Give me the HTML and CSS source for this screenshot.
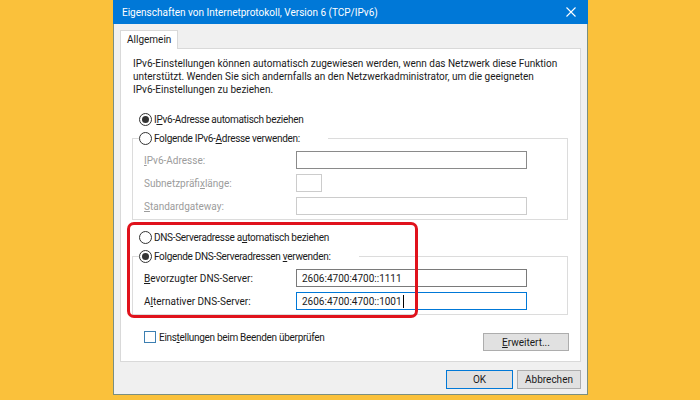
FILE: index.html
```html
<!DOCTYPE html>
<html>
<head>
  <meta charset="UTF-8">
  <title>Eigenschaften von Internetprotokoll, Version 6 (TCP/IPv6)</title>
  <link rel="stylesheet" href="styles.css">
</head>
<body>
  <div class="window">
    <div class="titlebar">
      <span class="title">Eigenschaften von Internetprotokoll, Version 6 (TCP/IPv6)</span>
      <span class="close">
        <svg width="10" height="10" viewBox="0 0 10 10"><path d="M0.5 0.5 L9.5 9.5 M9.5 0.5 L0.5 9.5" stroke="#fff" stroke-width="1.1" fill="none"/></svg>
      </span>
    </div>
    <div class="dialog">
      <div class="tabs"><div class="tab">Allgemein</div></div>
      <div class="panel">
        <p class="intro">IPv6-Einstellungen können automatisch zugewiesen werden, wenn das Netzwerk diese Funktion<br>
          unterstützt. Wenden Sie sich andernfalls an den Netzwerkadministrator, um die geeigneten<br>
          IPv6-Einstellungen zu beziehen.</p>

        <label class="radio first checked"><span class="circle"></span><span>I<u>P</u>v6-Adresse automatisch beziehen</span></label>
        <fieldset class="group">
          <legend><label class="radio"><span class="circle"></span><span>Folgende IPv6-<u>A</u>dresse verwenden:</span></label></legend>
          <div class="field disabled first-field"><span class="name"><u>I</u>Pv6-Adresse:</span><span class="edit wide strong"></span></div>
          <div class="field disabled"><span class="name">Subnetzpräfi<u>x</u>länge:</span><span class="edit small"></span></div>
          <div class="field disabled"><span class="name"><u>S</u>tandardgateway:</span><span class="edit wide"></span></div>
        </fieldset>

        <div class="dns">
          <label class="radio"><span class="circle"></span><span>DNS-Serveradresse a<u>u</u>tomatisch beziehen</span></label>
          <fieldset class="group">
            <legend><label class="radio checked"><span class="circle"></span><span>Folgende DNS-Serveradressen <u>v</u>erwenden:</span></label></legend>
            <div class="field first-field"><span class="name"><u>B</u>evorzugter DNS-Server:</span><span class="edit wide strong">2606:4700:4700::1111</span></div>
            <div class="field"><span class="name">A<u>l</u>ternativer DNS-Server:</span><span class="edit wide focus">2606:4700:4700::1001<i class="caret"></i></span></div>
          </fieldset>
          <div class="highlight"></div>
        </div>

        <div class="options">
          <label class="check"><span class="box"></span><span>Eins<u>t</u>ellungen beim Beenden überprüfen</span></label>
          <button class="btn advanced"><u>E</u>rweitert...</button>
        </div>
      </div>
      <div class="actions">
        <button class="btn ok">OK</button>
        <button class="btn cancel">Abbrechen</button>
      </div>
    </div>
  </div>
</body>
</html>
```

FILE: styles.css
```css
* {
  box-sizing: border-box;
}
body {
  margin: 0;
  height: 400px;
  overflow: hidden;
  background-color: #FAC13B;
  font-family: Roboto, "Noto Sans", sans-serif;
  font-size: 10px;
  color: #1a1a1a;
}
u {
  text-decoration-thickness: 1px;
  text-underline-offset: 1px;
}
.window {
  width: 475px;
  height: 395px;
  margin-left: 113px;
  background-color: #F0F0F0;
  border: 1px solid #7B8F80;
  border-top: none;
}
.titlebar {
  height: 24px;
  margin: 0 -1px;
  padding-left: 9px;
  background-color: #0078D7;
  display: flex;
  align-items: center;
  justify-content: space-between;
  color: #fff;
  font-size: 10px;
}
.close {
  width: 34px;
  height: 24px;
  display: flex;
  align-items: center;
  justify-content: center;
}
.close svg {
  display: block;
}
.dialog {
  padding: 6px 6px 0 6px;
}
.tabs {
  display: flex;
}
.tab {
  height: 19px;
  padding: 3px 6px 0 6px;
  margin-bottom: -1px;
  background-color: #fff;
  border: 1px solid #D9D9D9;
  border-bottom: none;
  position: relative;
  z-index: 1;
}
.panel {
  height: 314px;
  padding: 8px 12px 0 12px;
  background-color: #fff;
  border: 1px solid #D9D9D9;
}
p.intro {
  margin: 0;
  line-height: 13px;
  white-space: nowrap;
}

/* radio buttons */
.radio {
  height: 13px;
  display: flex;
  align-items: center;
  gap: 2px;
  line-height: 13px;
  letter-spacing: -0.3px;
  white-space: nowrap;
}
.radio.first {
  margin: 17px 0 0 6px;
}
.circle {
  width: 13px;
  height: 13px;
  border: 1px solid #333;
  border-radius: 50%;
  background-color: #fff;
  display: flex;
  align-items: center;
  justify-content: center;
}
.checked .circle::after {
  content: "";
  width: 7px;
  height: 7px;
  border-radius: 50%;
  background-color: #333;
}

/* group boxes */
fieldset.group {
  margin: 6px 0 0 -1px;
  padding: 0 0 4px 0;
  border: 1px solid #DCDCDC;
  min-width: 0;
}
fieldset.group legend {
  margin-left: 6px;
  padding: 0 28px 0 0;
  background-color: #fff;
}
.field {
  height: 18px;
  margin-top: 5px;
  padding-left: 11px;
  display: flex;
  align-items: center;
}
.field.first-field {
  margin-top: 6px;
}
.field .name {
  width: 152px;
  flex: none;
}
.field.disabled .name {
  color: #9C9C9C;
}
.edit {
  height: 18px;
  padding-left: 5px;
  border: 1px solid #7A7A7A;
  background-color: #fff;
  display: flex;
  align-items: center;
}
.edit.wide {
  width: 231px;
}
.edit.small {
  width: 26px;
}
.disabled .edit {
  border-color: #CCCCCC;
}
.disabled .edit.strong {
  border-color: #8A8A8A;
}
.edit.focus {
  border-color: #0078D7;
}
.caret {
  width: 1px;
  height: 13px;
  margin-left: 1px;
  background-color: #000;
}

/* DNS block with red marker */
.dns {
  margin-top: 11px;
  position: relative;
}
.dns > .radio {
  margin-left: 6px;
}
.highlight {
  position: absolute;
  left: -6px;
  top: -9px;
  width: 291px;
  height: 96px;
  border: 3px solid #E0121C;
  border-radius: 7px;
  pointer-events: none;
}

/* bottom row of the panel */
.options {
  margin-top: 16px;
  display: flex;
  align-items: flex-start;
  justify-content: space-between;
}
.check {
  margin-left: 11px;
  height: 12px;
  display: flex;
  align-items: center;
  gap: 3px;
  letter-spacing: -0.3px;
  white-space: nowrap;
}
.box {
  width: 12px;
  height: 12px;
  border: 1px solid #3C7FB1;
  background-color: #fff;
}
.btn {
  height: 18px;
  padding: 0;
  border: 1px solid #ADADAD;
  background-color: #E1E1E1;
  font-family: inherit;
  font-size: 10px;
  color: #1a1a1a;
}
.btn.advanced {
  width: 86px;
  margin: 2px -1px 0 0;
}
.actions {
  display: flex;
  justify-content: flex-end;
  gap: 4px;
  margin-top: 8px;
}
.btn.ok {
  width: 67px;
  height: 19px;
  border: 1px solid #0078D7;
}
.btn.cancel {
  width: 64px;
  height: 19px;
}
```
